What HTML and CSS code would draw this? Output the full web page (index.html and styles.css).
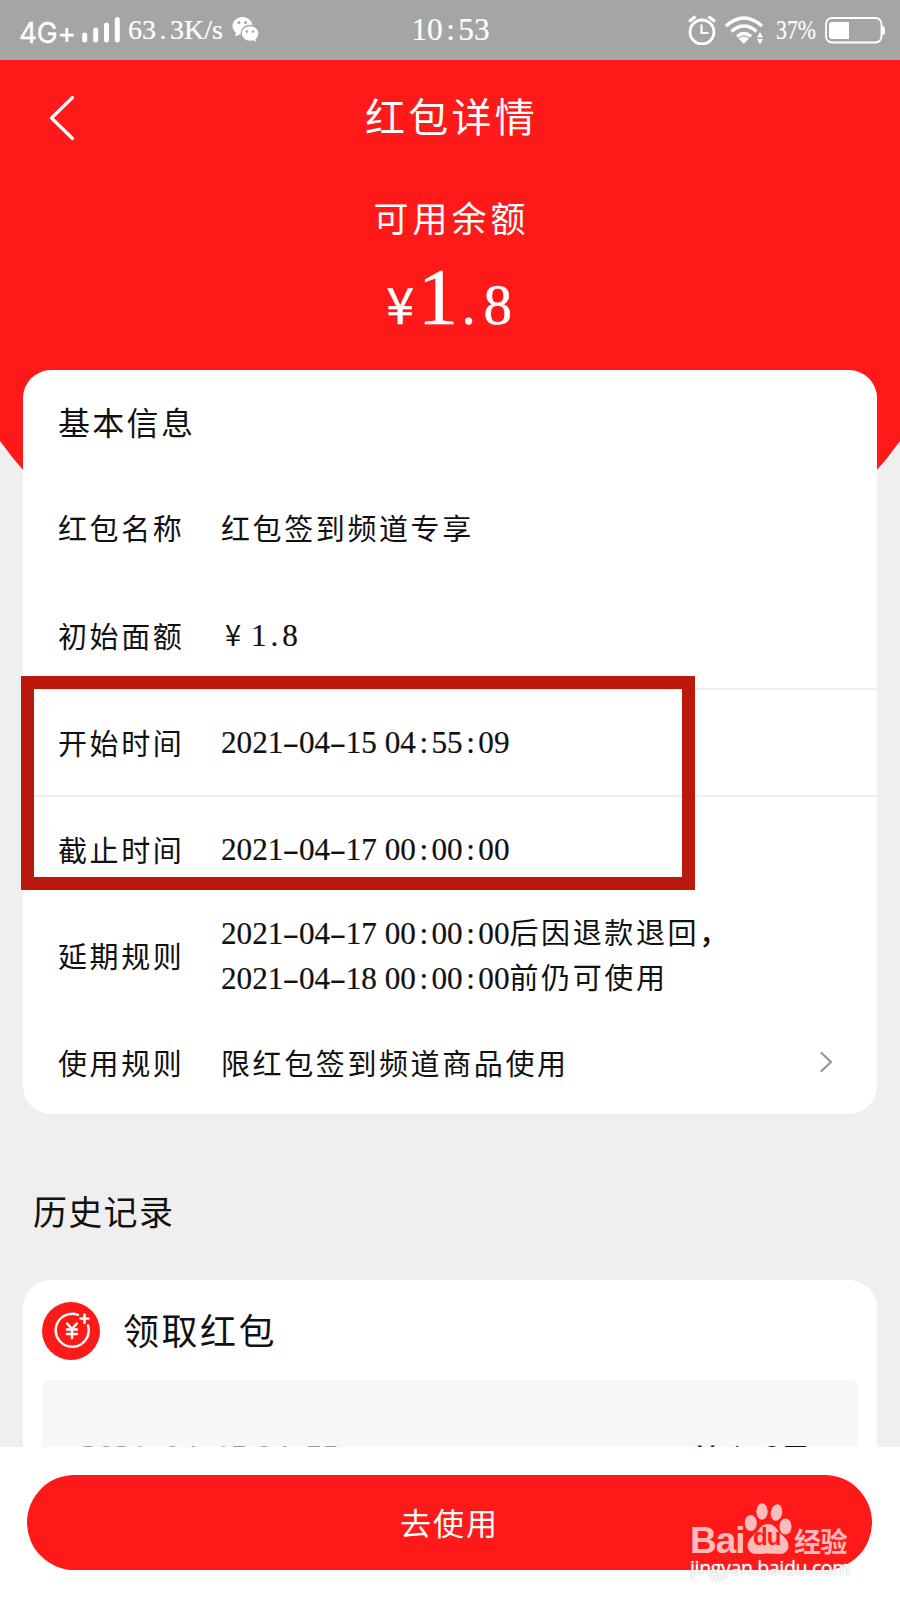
FILE: index.html
```html
<!DOCTYPE html>
<html lang="zh-CN">
<head>
<meta charset="utf-8">
<title>红包详情</title>
<link rel="stylesheet" href="styles.css">
</head>
<body>
<div class="screen">
  <header class="status">
    <div class="status-left">
      <span class="net">4G+</span>
      <svg class="signal" width="38" height="28" viewBox="0 0 38 28"><g stroke="#fff" stroke-width="5" stroke-linecap="round"><path d="M2.700 19v5M13.700 14v10M24.500 9v15M35.300 3.500v20.500"/></g></svg>
      <span class="num speed">63<i>.</i>3K/s</span>
      <svg class="wechat" width="28" height="28" viewBox="0 0 28 28">
        <path fill="#fff" d="M10.500 1C5 1 .5 4.800.5 10c0 3 1.500 5.300 3.500 7l-.8 3.500 4-2 3.300.5c5.500 0 10-4 10-9S16 1 10.500 1z"/>
        <path fill="#fff" stroke="#a5a5a5" stroke-width="1.300" d="M18.200 9.500c-5 0-9 3.500-9 8s4 8 9 8l3-.5 3.600 2-.6-3.500c1.700-1.500 2.800-3.600 2.800-6 0-4.500-4-8-8.800-8z"/>
        <g fill="#a5a5a5"><circle cx="7" cy="6.600" r="1.500"/><circle cx="13.500" cy="6.600" r="1.500"/><circle cx="15" cy="15.500" r="1.300"/><circle cx="21" cy="15.500" r="1.300"/></g>
      </svg>
    </div>
    <span class="num clock">10<i>:</i>53</span>
    <div class="status-right">
      <svg width="28" height="30" viewBox="0 0 28 30" fill="none" stroke="#fff" stroke-width="2.800"><circle cx="14" cy="17" r="12"/><path d="M13.500 9.500v8.500h7" stroke-width="2.200"/><path d="M1 6.500 7.500 1.500M20.500 1.500 27 6.500" stroke-width="3"/></svg>
      <svg class="wifi" width="39" height="29" viewBox="0 0 39 29" fill="none" stroke="#fff" stroke-width="3.400"><path d="M1 10Q19 -6 37 10M6.500 15.500Q19 4.500 31.500 15.500M12 20.500Q19 14.500 26 20.500"/><path fill="#fff" stroke="none" d="M13.500 22.500q5.500-4 10.500 0l-5.200 5.500zM32 21.500l3-5.500 3 5.500zM32 23l3 5.500 3-5.500z"/></svg>
      <span class="num percent">37%</span>
      <svg width="60" height="27" viewBox="0 0 60 27"><rect x="1" y="1" width="55.500" height="24.500" rx="6" fill="none" stroke="#fff" stroke-width="1.800"/><path fill="#fff" d="M7 5h17v17H7q-3 0-3-3V8q0-3 3-3zM57 9q3 0 3 2.500v4q0 2.500-3 2.500z"/></svg>
    </div>
  </header>

  <main class="page">
    <svg class="hero-bg" width="900" height="500" viewBox="0 0 900 500"><path fill="#ff1919" d="M0 0H900V381Q850 452 760 500H140Q50 452 0 381Z"/></svg>
    <section class="hero">
      <nav class="nav">
        <svg class="back" width="26" height="46" viewBox="0 0 26 46"><path d="M23.500 2.500 2.500 23 23.500 43.500" fill="none" stroke="#fff" stroke-width="3.200" stroke-linecap="round" stroke-linejoin="round"/></svg>
        <h1>红包详情</h1>
      </nav>
      <p class="caption">可用余额</p>
      <p class="amount"><span class="yen">¥</span><span class="one">1</span><span class="point">.</span><span class="dec">8</span></p>
    </section>

    <section class="card">
      <h2>基本信息</h2>
      <dl>
        <div class="row"><dt>红包名称</dt><dd>红包签到频道专享</dd></div>
        <div class="row ruled"><dt>初始面额</dt><dd class="price"><span class="price-yen">¥</span><span class="num">1<i>.</i>8</span></dd></div>
        <div class="row ruled"><dt>开始时间</dt><dd><span class="num">2021<b>-</b>04<b>-</b>15 04<i>:</i>55<i>:</i>09</span></dd></div>
        <div class="row"><dt>截止时间</dt><dd><span class="num">2021<b>-</b>04<b>-</b>17 00<i>:</i>00<i>:</i>00</span></dd></div>
        <div class="row"><dt>延期规则</dt><dd><span class="num">2021<b>-</b>04<b>-</b>17 00<i>:</i>00<i>:</i>00</span>后因退款退回<span class="comma">，</span><br><span class="num">2021<b>-</b>04<b>-</b>18 00<i>:</i>00<i>:</i>00</span>前仍可使用</dd></div>
        <div class="row"><dt>使用规则</dt><dd>限红包签到频道商品使用</dd><svg class="more" width="16" height="22" viewBox="0 0 16 22"><path d="M2.500 2 12 11 2.500 20" fill="none" stroke="#999" stroke-width="2.400" stroke-linecap="round" stroke-linejoin="round"/></svg></div>
      </dl>
      <div class="highlight"></div>
    </section>

    <h2 class="history-title">历史记录</h2>
    <section class="history">
      <div class="history-head">
        <svg width="58" height="58" viewBox="0 0 58 58"><circle cx="29" cy="29" r="29" fill="#ff1919"/><g fill="none" stroke="#fff" stroke-width="2.500" stroke-linecap="round"><path d="M36 12.800A16.500 16.500 0 1 0 46 23.500"/><path d="M38.500 16.500h8M42.500 12.500v8.500M25.200 21.500l4.800 5.500 4.800-5.500M30 27v9M25 27.500h10M25 32h10"/></g></svg>
        <h3>领取红包</h3>
      </div>
      <div class="record">
        <span class="num when">2021<b>-</b>04<b>-</b>15 04<i>:</i>55</span>
        <span class="sum"><span class="price-yen">¥</span><span class="num">1<i>.</i>8</span><span class="unit">元</span></span>
      </div>
    </section>
  </main>

  <footer class="footer">
    <div class="use">去使用</div>
    <div class="watermark">
      <div class="brand">
        <span class="bai">Bai</span>
        <span class="paw">
          <svg width="48" height="53" viewBox="0 0 48 53" fill="#ffbcbc"><ellipse cx="6.800" cy="20" rx="6" ry="8"/><ellipse cx="18" cy="8.500" rx="5.700" ry="8.300"/><ellipse cx="32.500" cy="9.500" rx="5.700" ry="8.300" transform="rotate(10 32.500 9.500)"/><ellipse cx="41.500" cy="23.500" rx="6" ry="8"/><path d="M24 21c6 0 8 4 11 8 4 4 9.500 8 9.500 13.500 0 5.500-4 8.500-8.500 8.500-4 0-8-.5-12-.5s-8 .5-12 .5c-4.500 0-8.500-3-8.500-8.500C3.500 37 9 33 13 29c3-4 5-8 11-8z"/></svg>
          <span class="du">du</span>
        </span>
        <span class="exp">经验</span>
      </div>
      <div class="url">jingyan.baidu.com</div>
    </div>
  </footer>
</div>
</body>
</html>
```
FILE: styles.css
```css
* { box-sizing: border-box; }
body, h1, h2, h3, p, dl, dd { margin: 0; }
h1, h2, h3 { font-weight: 400; }
svg { display: block; flex: none; }

body {
  background: #efefef;
  color: #111;
  font-family: KaiTi, "Noto Sans CJK SC", sans-serif;
}

.screen {
  width: 900px;
  height: 1600px;
  overflow: hidden;
  display: flex;
  flex-direction: column;
}

/* half-width figures; punctuation takes the same advance as a digit */
.num {
  font-family: "Liberation Serif", serif;
  font-size: 31.200px;
  letter-spacing: 0;
  white-space: nowrap;
  -webkit-text-stroke: .2px currentColor;
}
.num i, .num b { display: inline-block; width: .5em; font-style: normal; font-weight: 400; text-align: center; }
.num b { transform: scaleX(1.600); }

.status {
  flex: none;
  height: 60px;
  padding: 0 15px 0 19px;
  background: #a5a5a5;
  color: #fff;
  display: grid;
  grid-template-columns: 1fr auto 1fr;
  align-items: center;
}
.status-left, .status-right { display: flex; align-items: center; }
.status-right { justify-content: flex-end; }
.net { font: 28px/30px Inter, sans-serif; padding-top: 6px; width: 63px; letter-spacing: -.3px; -webkit-text-stroke: .3px #fff; }
.speed { font-size: 28px; margin-left: 8px; width: 104px; }
.clock { font-size: 31.300px; margin-right: 3px; }
.wifi { margin-left: 9px; }
.percent { font-size: 28px; margin: 0 9px 0 12px; width: 40px; transform: scaleX(.78); transform-origin: left; }

.page { position: relative; flex: none; height: 1387px; overflow: hidden; }
.hero-bg { position: absolute; left: 0; top: 0; }
.hero { position: relative; height: 310px; color: #fff; text-align: center; }
.nav { height: 115px; display: flex; align-items: center; padding-left: 49px; }
.nav h1 { flex: 1; margin: 0 76px 5px 0; font-size: 40px; line-height: 60px; letter-spacing: 3.200px; padding-left: 4px; }
.caption { margin-top: 17px; font-size: 35px; line-height: 50px; letter-spacing: 4px; padding-left: 3px; }
.amount {
  height: 80px;
  margin-top: 15px;
  display: flex;
  justify-content: center;
  align-items: baseline;
  font: 57px/80px "Liberation Serif", serif;
  -webkit-text-stroke: .5px #fff;
}
.yen { font: 50px/80px "Noto Sans CJK SC", sans-serif; width: 33px; }
.one { font-size: 80px; width: 43px; }
.point { width: 24px; text-align: left; padding-left: 2px; }
.dec { width: 33px; text-align: left; }

.card {
  position: relative;
  height: 744px;
  margin: 0 23px;
  border-radius: 28px;
  background: #fff;
}
.card h2 { height: 105px; padding-left: 35px; font-size: 32px; line-height: 103px; letter-spacing: 2.300px; }
.row {
  height: 106.400px;
  padding: 0 42px 2px 35px;
  display: flex;
  align-items: center;
  font-size: 29px;
  letter-spacing: 2.600px;
  line-height: 42px;
}
.row:nth-child(2) { height: 109px; padding-bottom: 0; }
.ruled { border-bottom: 2px solid #efefef; }
.row dt { width: 163px; flex: none; }
.row dd { flex: 1; white-space: nowrap; }
.price { padding-left: 4px; }
.price-yen { display: inline-block; width: 26px; }
.comma { font-weight: 500; }

/* marker frame drawn over the two time rows */
.highlight {
  position: absolute;
  left: -2px;
  top: 306px;
  width: 674px;
  height: 214px;
  border: 13px solid #bb190b;
}

.history-title { height: 166px; padding: 67px 0 0 33px; font-size: 34px; line-height: 60px; letter-spacing: 1.300px; }
.history { height: 200px; margin: 0 23px; padding: 22px 19px 0; border-radius: 28px; background: #fff; }
.history-head { display: flex; align-items: center; gap: 23px; height: 58px; }
.history-head h3 { margin-bottom: 4px; font-size: 36px; line-height: 54px; letter-spacing: 2.500px; }
.record {
  height: 140px;
  margin-top: 20px;
  padding: 57px 47px 0 39px;
  border-radius: 8px;
  background: #f7f7f7;
  display: flex;
  justify-content: space-between;
  align-items: flex-start;
  font-size: 31px;
  line-height: 42px;
}
.when { margin-top: -1px; font-size: 33.300px; color: #999; }
.sum { display: flex; }
.sum .price-yen { width: 30px; margin-top: -3px; font-size: 33px; }
.sum .num { font-size: 36px; }
.unit { width: 30px; margin-top: -2px; font-size: 29px; }

.footer { position: relative; flex: none; height: 153px; padding: 28px 28px 0 27px; background: #fff; }
.use {
  height: 95px;
  border-radius: 48px;
  background: #ff1919;
  color: #fff;
  font-size: 31px;
  line-height: 94px;
  letter-spacing: 2px;
  text-align: center;
}
.watermark { position: absolute; left: 690px; top: 57px; width: 164px; color: #ffbcbc; }
.brand { display: flex; align-items: flex-end; height: 52px; }
.bai { font: 700 37px/34px "Liberation Sans", sans-serif; width: 54px; height: 32px; letter-spacing: -1px; }
.paw { position: relative; }
.du { position: absolute; left: 9px; top: 19px; color: #ff1919; font: 700 24px/30px "Liberation Sans", sans-serif; letter-spacing: -1px; }
.exp { font: 700 27px/30px "Noto Sans CJK SC", sans-serif; margin-left: 2px; letter-spacing: -.5px; }
.url { font: 19.500px/24px "Open Sans", sans-serif; letter-spacing: -.35px; color: #fff; text-shadow: 0 0 2px #aaa; white-space: nowrap; }
```
